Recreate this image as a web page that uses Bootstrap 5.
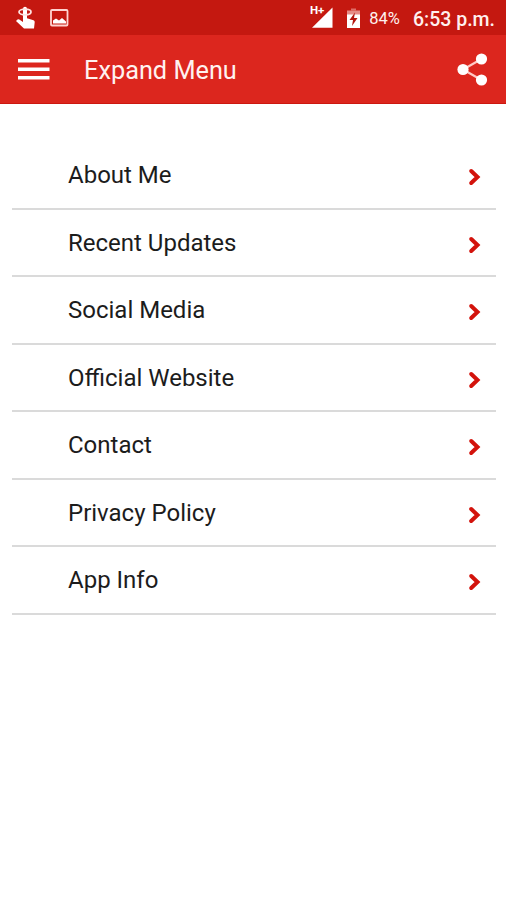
<!DOCTYPE html>
<html lang="en">
<head>
<meta charset="utf-8">
<meta name="viewport" content="width=device-width, initial-scale=1">
<title>Expand Menu</title>
<link rel="stylesheet" href="https://cdn.jsdelivr.net/npm/bootstrap@5.3.0/dist/css/bootstrap.min.css">
<style>
body{font-family:Roboto,"Liberation Sans",sans-serif;background:#fff;color:#1c1c1c}
svg{display:block;flex:none}
.status-bar{height:35px;background:#c41810;padding-left:14px;padding-right:11px;color:#fff0ee}
.battery-icon{margin-left:12px}
.battery-level{font-size:16.5px;line-height:35px;margin-left:8px;padding-top:1px}
.clock{font-size:19.5px;line-height:35px;font-weight:500;margin-left:13px;padding-top:3px}
.app-bar{height:69px;background:#dc261e;border-bottom:1px solid #cc1710;padding:0 17px 0 18px;color:#fff}
.app-title{font-size:25.3px;line-height:69px;margin-left:34px;padding-top:2px;color:#fff2f0}
.menu-list{margin:38.4px 10px 0 12px}
.menu-list .menu-row{height:67.53px;border:0;border-bottom:2px solid #dadada;border-radius:0;padding:0 14px 0 56px;font-size:24px;line-height:66px;color:#1c1c1c;background:none}
.menu-row svg{margin-top:4px}
</style>
<script src="https://cdn.jsdelivr.net/npm/bootstrap@5.3.0/dist/js/bootstrap.bundle.min.js"></script>
</head>
<body>
<header>
  <div class="status-bar d-flex align-items-center">
    <svg width="22" height="24" viewBox="0 0 22 24" fill="#fff"><path d="M9 16V3Q9 .8 11 .8T13 3v9.200l6.500 2q1.400.6 1.200 2L20 22.500H10L2 15l1.500-1.600q.8-.5 1.800 0z"/><ellipse cx="11" cy="6" rx="6" ry="2.800" fill="none" stroke="#ffe3e1" stroke-width="1.800"/></svg>
    <svg class="ms-2" width="30" height="24" viewBox="0 0 30 24"><rect x="7" y="4" width="16.500" height="15.500" rx="1" fill="none" stroke="#ffd3d0" stroke-width="1.800"/><path d="M9 17.500v-3l3-2 3 2 3-2.500 4 3.500v2z" fill="#fff"/></svg>
    <svg class="ms-auto" width="24" height="28" viewBox="0 0 24 28"><path d="M2 23.800 22.500 3.500v20.300z" fill="#fff"/><text x="0" y="9.800" font-size="11.500" font-weight="700" fill="#fff" stroke="#c41810" stroke-width="1.500" paint-order="stroke">H+</text></svg>
    <svg class="battery-icon" width="15" height="22" viewBox="0 0 15 22"><path d="M5 1.500h5v2H5z" fill="#df6d67"/><path d="M1 3.500h13V8H1z" fill="#e58c87"/><path d="M1 7.500h13V21H1z" fill="#fff"/><path d="M9 5.500 3.500 13h3.500l-1 6 5.500-8H8z" fill="#b3140d"/></svg>
    <span class="battery-level">84%</span>
    <span class="clock">6:53 p.m.</span>
  </div>
  <nav class="app-bar d-flex align-items-center">
    <svg width="32" height="24" viewBox="0 0 32 24" fill="#fff"><path d="M0 2h31.500v3.500H0zM0 10.500h31.500V14H0zM0 19h31.500v3.500H0z"/></svg>
    <h1 class="app-title fw-normal mb-0">Expand Menu</h1>
    <svg class="ms-auto" width="32" height="34" viewBox="0 0 32 34"><path d="M24.500 7 6 17.500 24.500 28" fill="none" stroke="#ffc9c5" stroke-width="2.200"/><g fill="#fff"><circle cx="24.500" cy="7" r="5.600"/><circle cx="6" cy="17.500" r="5.600"/><circle cx="24.500" cy="28" r="5.600"/></g></svg>
  </nav>
</header>
<svg class="d-none"><symbol id="chevron" viewBox="0 0 14 18"><path d="M3.200 3 9.500 9l-6.300 6" fill="none" stroke="#d3130c" stroke-width="4" stroke-linecap="round"/></symbol></svg>
<main class="menu-list list-group">
  <a href="#" class="menu-row list-group-item d-flex align-items-center justify-content-between">About Me<svg width="14" height="18"><use href="#chevron"/></svg></a>
  <a href="#" class="menu-row list-group-item d-flex align-items-center justify-content-between">Recent Updates<svg width="14" height="18"><use href="#chevron"/></svg></a>
  <a href="#" class="menu-row list-group-item d-flex align-items-center justify-content-between">Social Media<svg width="14" height="18"><use href="#chevron"/></svg></a>
  <a href="#" class="menu-row list-group-item d-flex align-items-center justify-content-between">Official Website<svg width="14" height="18"><use href="#chevron"/></svg></a>
  <a href="#" class="menu-row list-group-item d-flex align-items-center justify-content-between">Contact<svg width="14" height="18"><use href="#chevron"/></svg></a>
  <a href="#" class="menu-row list-group-item d-flex align-items-center justify-content-between">Privacy Policy<svg width="14" height="18"><use href="#chevron"/></svg></a>
  <a href="#" class="menu-row list-group-item d-flex align-items-center justify-content-between">App Info<svg width="14" height="18"><use href="#chevron"/></svg></a>
</main>
</body>
</html>
